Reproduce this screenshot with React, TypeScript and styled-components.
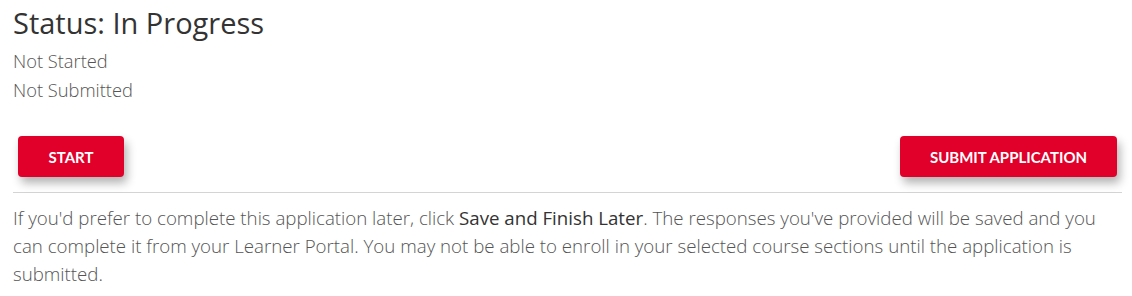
import React from 'react'
import styled, { createGlobalStyle } from 'styled-components'

const Global = createGlobalStyle`
  body {
    margin: 0;
    background: #fff;
    font-family: 'Open Sans', 'Liberation Sans', sans-serif;
  }
`

const Page = styled.div`
  padding: 4px 10px 0 13px;
`

const Title = styled.h2`
  margin: 0 0 4px;
  font-size: 29px;
  font-weight: 400;
  line-height: 38px;
  color: #333;
`

const StatusLine = styled.div`
  font-size: 18.3px;
  font-weight: 300;
  line-height: 29px;
  color: #555;
`

const Actions = styled.div`
  display: flex;
  justify-content: space-between;
  align-items: center;
  margin-top: 32px;
  padding: 0 5px 15px;
  border-bottom: 1px solid #d4d4d4;
`

const Button = styled.button<{ $wide?: boolean }>`
  height: 41px;
  width: ${p => (p.$wide ? '217px' : '106px')};
  border: 0;
  border-radius: 4px;
  background: #e0002a;
  color: #fff;
  font-family: Lato, 'Liberation Sans', sans-serif;
  font-weight: 700;
  font-size: 15px;
  box-shadow: 3px 6px 10px rgba(0, 0, 0, 0.3);
  cursor: pointer;
`

const Note = styled.p`
  margin: 11px 0 0;
  font-size: 18.7px;
  font-weight: 300;
  line-height: 28px;
  color: #555;
  max-width: 1100px;

  strong {
    font-weight: 400;
    color: #333;
  }
`

export default function App() {
  return (
    <Page>
      <Global />
      <Title>Status: In Progress</Title>
      <StatusLine>Not Started</StatusLine>
      <StatusLine>Not Submitted</StatusLine>
      <Actions>
        <Button>START</Button>
        <Button $wide>SUBMIT APPLICATION</Button>
      </Actions>
      <Note>
        If you'd prefer to complete this application later, click <strong>Save and Finish Later</strong>. The
        responses you've provided will be saved and you can complete it from your Learner Portal. You may not be
        able to enroll in your selected course sections until the application is submitted.
      </Note>
    </Page>
  )
}
